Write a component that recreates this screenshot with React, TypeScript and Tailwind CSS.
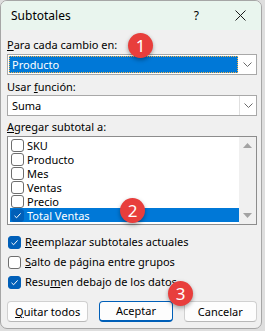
import React from "react";

type Item = { label: string; checked: boolean; selected?: boolean };

const items: Item[] = [
  { label: "SKU", checked: false },
  { label: "Producto", checked: false },
  { label: "Mes", checked: false },
  { label: "Ventas", checked: false },
  { label: "Precio", checked: false },
  { label: "Total Ventas", checked: true, selected: true },
];

function Check({ checked }: { checked: boolean }) {
  if (checked) {
    return (
      <span className="w-[13px] h-[13px] rounded-[3px] bg-[#005fb8] border border-[#005fb8] flex items-center justify-center shrink-0">
        <svg width="9" height="9" viewBox="0 0 9 9">
          <path d="M1.5 4.8 L3.6 6.8 L7.6 2.4" fill="none" stroke="#ffffff" strokeWidth="1" />
        </svg>
      </span>
    );
  }
  return <span className="w-[13px] h-[13px] rounded-[3px] bg-white border border-[#6e6e6e] shrink-0" />;
}

function Chevron() {
  return (
    <svg width="9" height="5" viewBox="0 0 9 5">
      <path d="M0.5 0.5 L4.5 4.5 L8.5 0.5" fill="none" stroke="#6a6a6a" strokeWidth="1" />
    </svg>
  );
}

function Badge({ n, className }: { n: number; className: string }) {
  return (
    <div
      className={`absolute w-[25px] h-[25px] rounded-full bg-[#e83e3c] text-white flex items-center justify-center text-[17px] leading-none shadow-[0_2px_4px_rgba(0,0,0,0.35)] ${className}`}
    >
      {n}
    </div>
  );
}

export default function App() {
  return (
    <div
      className="w-[265px] h-[331px] bg-[#dedede] text-[11px] text-black"
      style={{ fontFamily: '"Noto Sans", "Segoe UI", sans-serif' }}
    >
      <div className="relative w-[262px] h-[329px] border border-[#a6a6a6] rounded-[7px] overflow-hidden bg-[#f0f0f0] flex flex-col">
        {/* barra de título */}
        <div className="h-[29px] bg-[#e9f5ee] flex items-center pl-[10px] shrink-0">
          <span className="text-[12px]">Subtotales</span>
          <span className="ml-auto text-[12px] mr-[36px]">?</span>
          <svg width="11" height="11" viewBox="0 0 11 11" className="mr-[15px]">
            <path d="M0.5 0.5 L10.5 10.5 M10.5 0.5 L0.5 10.5" stroke="#1a1a1a" strokeWidth="1" />
          </svg>
        </div>

        <div className="pl-[6px] pr-[4px] flex flex-col">
          <div className="mt-[7px] h-[16px] leading-[16px]">
            <u>P</u>ara cada cambio en:
          </div>
          <div className="mt-[1px] h-[21px] bg-white border border-[#a8a8a8] flex">
            <div className="flex-1 m-[1px] bg-[#0078d7] border border-dotted border-[#f3b24a] text-white pl-[2px] leading-[15px]">
              Producto
            </div>
            <div className="w-[17px] flex items-center justify-center">
              <Chevron />
            </div>
          </div>

          <div className="mt-[4px] h-[16px] leading-[16px]">
            Usar <u>f</u>unción:
          </div>
          <div className="h-[21px] bg-white border border-[#a8a8a8] flex">
            <div className="flex-1 pl-[4px] leading-[19px]">Suma</div>
            <div className="w-[17px] flex items-center justify-center border-l border-[#e0e0e0]">
              <Chevron />
            </div>
          </div>

          <div className="mt-[3px] h-[16px] leading-[16px]">
            <u>A</u>gregar subtotal a:
          </div>
          <div className="mt-[1px] h-[89px] bg-white border border-[#8c8c8c] flex">
            <div className="flex-1 pt-[1px] pl-[2px] flex flex-col">
              {items.map((it) => (
                <div
                  key={it.label}
                  className={`h-[14px] flex items-center gap-[3px] pl-[1px] ${
                    it.selected ? "bg-[#0078d7] text-white" : ""
                  }`}
                >
                  <Check checked={it.checked} />
                  <span className="leading-[13px]">{it.label}</span>
                </div>
              ))}
            </div>
            <div className="w-[17px] bg-[#f0f0f0] flex flex-col items-center justify-between py-[6px]">
              <svg width="9" height="5" viewBox="0 0 9 5">
                <path d="M0 5 L4.5 0 L9 5 Z" fill="#a3a3a3" />
              </svg>
              <svg width="9" height="5" viewBox="0 0 9 5">
                <path d="M0 0 L4.5 5 L9 0 Z" fill="#a3a3a3" />
              </svg>
            </div>
          </div>

          <div className="mt-[7px] h-[20px] flex items-center gap-[4px] pl-[1px]">
            <Check checked={true} />
            <span>
              <u>R</u>eemplazar subtotales actuales
            </span>
          </div>
          <div className="h-[20px] flex items-center gap-[4px] pl-[1px]">
            <Check checked={false} />
            <span>
              <u>S</u>alto de página entre grupos
            </span>
          </div>
          <div className="h-[20px] flex items-center gap-[4px] pl-[1px]">
            <Check checked={true} />
            <span>
              Resu<u>m</u>en debajo de los datos
            </span>
          </div>

          <div className="mt-[9px] flex gap-[11px]">
            <button className="w-[82px] h-[21px] rounded-[4px] bg-[#fdfdfd] border border-[#d0d0d0] border-b-[#b8b8b8] leading-[19px]">
              <u>Q</u>uitar todos
            </button>
            <button className="w-[74px] h-[21px] rounded-[4px] bg-[#fdfdfd] border border-[#005fb8] border-b-2 leading-[18px]">
              Aceptar
            </button>
            <button className="w-[74px] h-[21px] rounded-[4px] bg-[#fdfdfd] border border-[#d0d0d0] border-b-[#b8b8b8] leading-[19px]">
              Cancelar
            </button>
          </div>
        </div>

        <Badge n={1} className="left-[127px] top-[32px]" />
        <Badge n={2} className="left-[119px] top-[197px]" />
        <Badge n={3} className="left-[167px] top-[280px]" />
      </div>
    </div>
  );
}
